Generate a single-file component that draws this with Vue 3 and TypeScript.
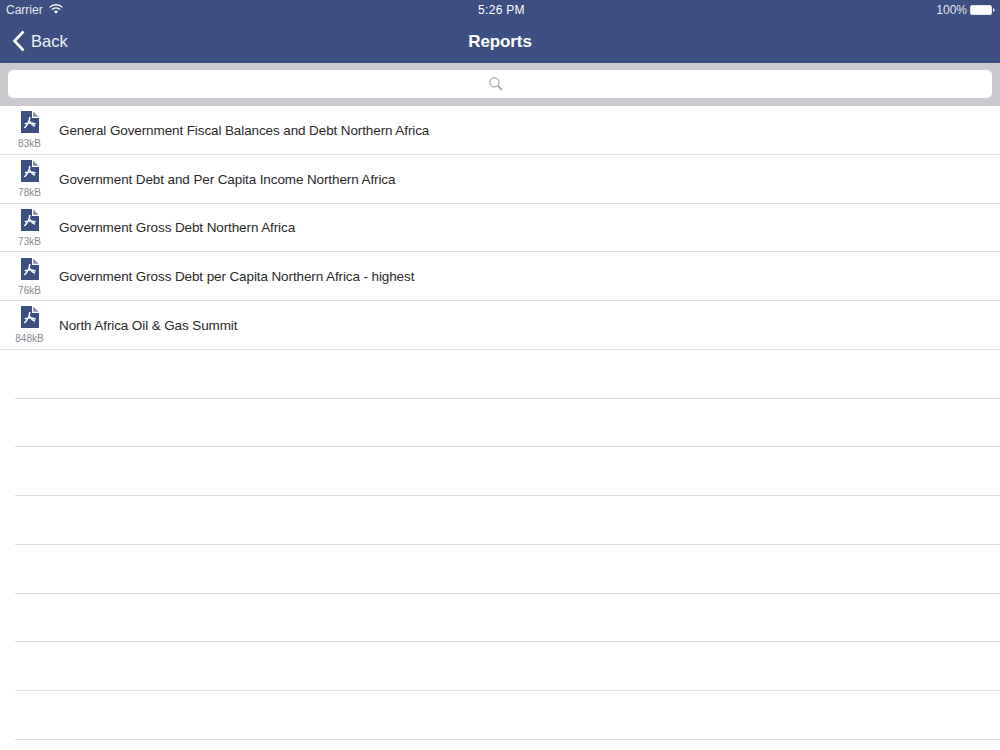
<script setup lang="ts">
interface Report { size: string; title: string }
const reports: Report[] = [
  { size: '83kB', title: 'General Government Fiscal Balances and Debt Northern Africa' },
  { size: '78kB', title: 'Government Debt and Per Capita Income Northern Africa' },
  { size: '73kB', title: 'Government Gross Debt Northern Africa' },
  { size: '76kB', title: 'Government Gross Debt per Capita Northern Africa - highest' },
  { size: '848kB', title: 'North Africa Oil & Gas Summit' },
]
const emptyRows: number[] = [1, 2, 3, 4, 5, 6, 7, 8]
</script>

<template>
  <div class="screen">
    <header class="nav">
      <div class="status">
        <div class="status-left">
          <span>Carrier</span>
          <svg class="wifi" width="14" height="10" viewBox="0 0 14 10">
            <path d="M0.6 3.4 A9 9 0 0 1 13.4 3.4" fill="none" stroke="#fff" stroke-width="1.3" />
            <path d="M2.8 5.5 A6 6 0 0 1 11.2 5.5" fill="none" stroke="#fff" stroke-width="1.3" />
            <path d="M4.9 7.5 A3 3 0 0 1 9.1 7.5 L7 9.8 Z" fill="#fff" />
          </svg>
        </div>
        <div class="status-time">5:26 PM</div>
        <div class="status-right">
          <span>100%</span>
          <svg width="25" height="10" viewBox="0 0 25 10">
            <rect x="0.5" y="0.5" width="21" height="9" rx="1.5" fill="#fff" stroke="#fff" stroke-opacity="0.7" />
            <path d="M23 3.2 C24 3.4 24.5 4 24.5 5 C24.5 6 24 6.6 23 6.8 Z" fill="#fff" />
          </svg>
        </div>
      </div>
      <div class="bar">
        <div class="back">
          <svg width="14" height="22" viewBox="0 0 14 22">
            <path d="M11.5 1.5 L2.5 11 L11.5 20.5" fill="none" stroke="#fff" stroke-width="2.6" />
          </svg>
          <span>Back</span>
        </div>
        <div class="title">Reports</div>
      </div>
    </header>
    <div class="search">
      <div class="field">
        <svg class="glass" width="14" height="14" viewBox="0 0 14 14">
          <circle cx="5.4" cy="5.4" r="4.6" fill="none" stroke="#8e8e93" stroke-width="1" />
          <path d="M8.8 8.8 L13 13" stroke="#8e8e93" stroke-width="1.4" />
        </svg>
      </div>
    </div>
    <ul class="list">
      <li v-for="r in reports" :key="r.title" class="row">
        <div class="file">
          <svg width="18" height="22" viewBox="0 0 18 22">
            <path d="M0 0 H11 V7 H18 V22 H0 Z" fill="#3c4f80" />
            <path d="M12.2 0.4 L17.6 5.8 H12.2 Z" fill="#7d8aab" />
            <path d="M8.8 6 C8.6 9.5 7 13.5 3.4 17 M3.8 12.8 C7.5 11.6 10.8 11.4 14.6 13 M8.8 10.5 C10 12.5 11.6 14.4 13.8 15.2" fill="none" stroke="#fff" stroke-width="1.5" />
          </svg>
          <span class="size">{{ r.size }}</span>
        </div>
        <span class="name">{{ r.title }}</span>
      </li>
      <li v-for="n in emptyRows" :key="n" class="row empty"></li>
    </ul>
  </div>
</template>

<style scoped>
.screen {
  width: 1000px;
  height: 750px;
  overflow: hidden;
  background: #fff;
  font-family: "Liberation Sans", Arial, sans-serif;
}
.nav {
  height: 63px;
  background: #3c4f80;
  color: #fff;
  display: flex;
  flex-direction: column;
}
.status {
  height: 20px;
  padding: 0 5px 0 6px;
  display: grid;
  grid-template-columns: 1fr auto 1fr;
  align-items: center;
  font-size: 12px;
}
.status-left { display: flex; align-items: center; gap: 5px; color: #e4e7ef; }
.wifi { margin-top: -2px; margin-left: 1px; }
.status-time { font-size: 12px; letter-spacing: 0.3px; padding-left: 2px; }
.status-right { display: flex; justify-content: flex-end; align-items: center; gap: 3px; color: #e4e7ef; }
.bar {
  flex: 1;
  position: relative;
  display: flex;
  align-items: center;
  justify-content: center;
  padding-top: 1px;
}
.back {
  position: absolute;
  left: 12px;
  top: 10px;
  display: flex;
  align-items: center;
  gap: 5px;
  font-size: 16.5px;
  color: #eef0f5;
}
.back span { padding-top: 1px; }
.title { font-size: 17px; font-weight: 700; letter-spacing: -0.1px; }
.search {
  height: 43px;
  box-sizing: border-box;
  background: #c9c9ce;
  padding: 7px 8px 8px;
}
.field {
  height: 28px;
  background: #fff;
  border-radius: 5px;
  display: flex;
  align-items: center;
  justify-content: center;
}
.glass { margin-right: 8px; }
.list { list-style: none; margin: 0; padding: 0; }
.row {
  height: 48.75px;
  box-sizing: border-box;
  border-bottom: 1px solid #dcdce0;
  display: flex;
  align-items: center;
}
.row.empty { margin-left: 15px; }
.file {
  width: 59px;
  flex: none;
  display: flex;
  flex-direction: column;
  align-items: center;
  margin-top: 2px;
}
.size {
  margin-top: 5px;
  font-size: 10px;
  line-height: 12px;
  color: #8a8a8f;
}
.name {
  font-size: 13.5px;
  letter-spacing: -0.11px;
  padding-top: 1px;
  color: #2a2a2a;
}
</style>
